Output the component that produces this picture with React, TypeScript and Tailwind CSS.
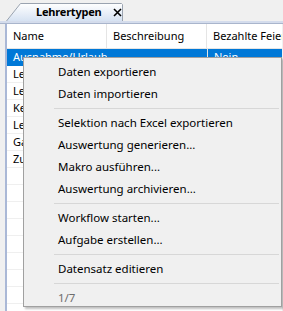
export default function App() {
  const rows = ['Ausnahme/Urlaub', 'Lehrer', 'Lehrer', 'Kein', 'Lehrer', 'Gast', 'Zusatz', '', '', '', '', '', '', '', '']

  return (
    <div
      className="relative w-[283px] h-[311px] overflow-hidden bg-[#f0f0f0] text-[11px] text-black"
      style={{ fontFamily: '"Segoe UI", "Noto Sans", sans-serif' }}
    >
      {/* tab strip */}
      <div className="h-[21px] flex items-end pl-[6px] pt-[3px]">
        <div className="relative h-[18px] w-[118px] flex items-center">
          <svg className="absolute inset-0" width="118" height="18" viewBox="0 0 118 18">
            <defs>
              <linearGradient id="tabg" x1="0" y1="0" x2="0" y2="1">
                <stop offset="0" stopColor="#ffffff" />
                <stop offset="1" stopColor="#d6e2f2" />
              </linearGradient>
            </defs>
            <path d="M0.5 18 L14.5 0.5 L115.5 0.5 L116.5 1.5 L116.5 18" fill="url(#tabg)" stroke="#9aa3b0" />
          </svg>
          <span className="relative ml-[30px] font-bold tracking-[-0.2px] whitespace-nowrap">Lehrertypen</span>
          <svg className="relative ml-[11px] shrink-0" width="9" height="9" viewBox="0 0 9 9">
            <path d="M1 1 L8 8 M8 1 L1 8" stroke="#000" strokeWidth="1.6" />
          </svg>
        </div>
      </div>
      <div className="h-[3px] bg-[#d4dcec] border-b border-[#a9b5cc]" />

      {/* grid panel */}
      <div className="ml-[5px] mr-[1px] border-l-2 border-[#aab8d6] bg-white h-[290px]">
        <div className="flex h-[25px] items-center border-b border-[#e5e5e5]">
          <div className="w-[100px] pl-[6px] border-r border-[#e5e5e5] h-full flex items-center">Name</div>
          <div className="w-[100px] pl-[6px] border-r border-[#e5e5e5] h-full flex items-center">Beschreibung</div>
          <div className="flex-1 pl-[6px] whitespace-nowrap overflow-hidden h-full flex items-center">Bezahlte Feiertage</div>
        </div>
        {rows.map((r, i) => (
          <div
            key={i}
            className={
              i === 0
                ? 'flex h-[17px] items-center bg-[#0078d7] text-white'
                : 'flex h-[17px] items-center border-b border-[#efefef]'
            }
          >
            <div className="w-[100px] pl-[6px] whitespace-nowrap overflow-hidden">{r}</div>
            <div className="w-[100px] pl-[6px] border-l border-[#e5e5e5]" />
            <div className="flex-1 pl-[6px] border-l border-[#e5e5e5]">{i === 0 ? 'Nein' : ''}</div>
          </div>
        ))}
      </div>

      {/* context menu */}
      <div className="absolute left-[23px] top-[57px] w-[259px] h-[250px] bg-[#f0f0f0] border border-[#a0a0a0] shadow-[2px_2px_2px_rgba(0,0,0,0.25)] py-[3px] text-[11.5px]">
        <MenuItem label="Daten exportieren" />
        <MenuItem label="Daten importieren" />
        <Sep />
        <MenuItem label="Selektion nach Excel exportieren" />
        <MenuItem label="Auswertung generieren..." />
        <MenuItem label="Makro ausführen..." />
        <MenuItem label="Auswertung archivieren..." />
        <Sep />
        <MenuItem label="Workflow starten..." />
        <MenuItem label="Aufgabe erstellen..." />
        <Sep />
        <MenuItem label="Datensatz editieren" />
        <Sep />
        <MenuItem label="1/7" muted />
      </div>
    </div>
  )
}

function MenuItem({ label, muted }: { label: string; muted?: boolean }) {
  return (
    <div className={'h-[22px] flex items-center pl-[34px] whitespace-nowrap ' + (muted ? 'text-[#6d6d6d]' : '')}>
      {label}
    </div>
  )
}

function Sep() {
  return <div className="ml-[30px] mr-[2px] my-[3px] h-px bg-[#d7d7d7]" />
}
